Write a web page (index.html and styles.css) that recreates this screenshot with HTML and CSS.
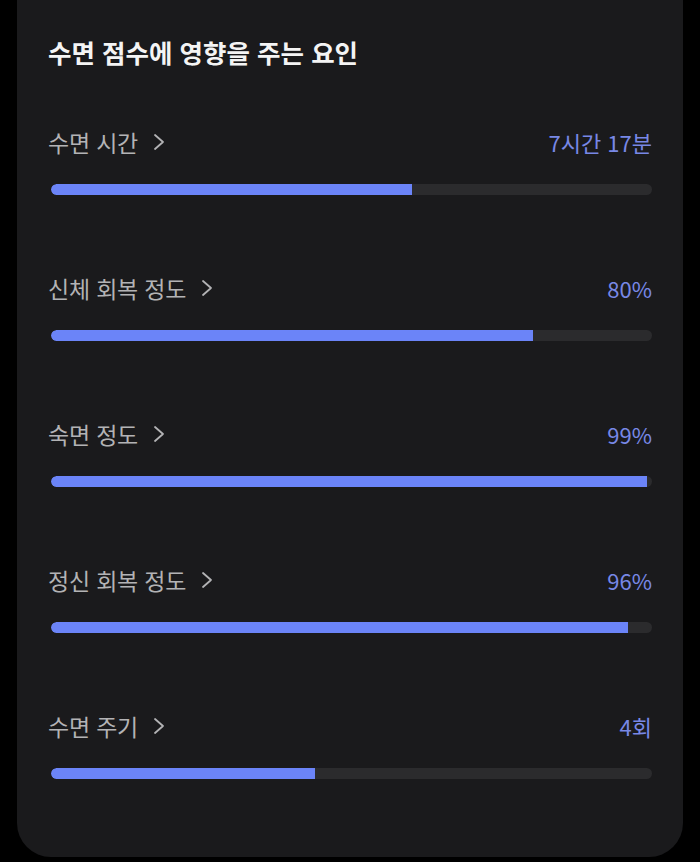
FILE: index.html
```html
<!DOCTYPE html>
<html lang="ko">
<head>
<meta charset="utf-8">
<title>수면 점수에 영향을 주는 요인</title>
<link rel="stylesheet" href="styles.css">
</head>
<body>
<section class="card">
  <h2 class="title">수면 점수에 영향을 주는 요인</h2>
  <ul class="factors">
    <li class="factor">
      <div class="factor-head">
        <span class="label">수면 시간 <svg class="chev" viewBox="0 0 12 18" width="12" height="18"><polyline points="2,2 10,9 2,16"/></svg></span>
        <span class="value">7시간 17분</span>
      </div>
      <div class="track"><div class="fill" style="width:60%"></div></div>
    </li>
    <li class="factor">
      <div class="factor-head">
        <span class="label">신체 회복 정도 <svg class="chev" viewBox="0 0 12 18" width="12" height="18"><polyline points="2,2 10,9 2,16"/></svg></span>
        <span class="value">80%</span>
      </div>
      <div class="track"><div class="fill" style="width:80.2%"></div></div>
    </li>
    <li class="factor">
      <div class="factor-head">
        <span class="label">숙면 정도 <svg class="chev" viewBox="0 0 12 18" width="12" height="18"><polyline points="2,2 10,9 2,16"/></svg></span>
        <span class="value">99%</span>
      </div>
      <div class="track"><div class="fill" style="width:99.2%"></div></div>
    </li>
    <li class="factor">
      <div class="factor-head">
        <span class="label">정신 회복 정도 <svg class="chev" viewBox="0 0 12 18" width="12" height="18"><polyline points="2,2 10,9 2,16"/></svg></span>
        <span class="value">96%</span>
      </div>
      <div class="track"><div class="fill" style="width:96%"></div></div>
    </li>
    <li class="factor">
      <div class="factor-head">
        <span class="label">수면 주기 <svg class="chev" viewBox="0 0 12 18" width="12" height="18"><polyline points="2,2 10,9 2,16"/></svg></span>
        <span class="value">4회</span>
      </div>
      <div class="track"><div class="fill" style="width:44%"></div></div>
    </li>
  </ul>
</section>
</body>
</html>
```
FILE: styles.css
```css
html, body {
  margin: 0;
  padding: 0;
  background: #000;
}
body {
  width: 700px;
  height: 862px;
  overflow: hidden;
  font-family: "Noto Sans CJK KR", "Noto Sans", sans-serif;
}
.card {
  margin: 0 17px;
  background: #1a1a1c;
  border-radius: 0 0 34px 34px;
  padding: 34px 31px 78px 31px;
}
.title {
  margin: 0;
  font-size: 25.5px;
  line-height: 36px;
  font-weight: 700;
  color: #f4f4f4;
}
.factors {
  list-style: none;
  margin: 57px 0 0 0;
  padding: 0;
  display: flex;
  flex-direction: column;
  gap: 78px;
}
.factor-head {
  display: flex;
  justify-content: space-between;
  align-items: center;
  height: 30px;
  margin-bottom: 27px;
}
.label {
  display: flex;
  align-items: center;
  gap: 10px;
  font-size: 23px;
  line-height: 30px;
  color: #b3b3b5;
  letter-spacing: -0.2px;
}
.chev {
  fill: none;
  stroke: #b3b3b5;
  stroke-width: 1.8;
  stroke-linecap: round;
  stroke-linejoin: round;
  margin-left: 5px;
}
.value {
  font-size: 22px;
  line-height: 30px;
  color: #7888e6;
}
.track {
  margin-left: 3px;
  height: 11px;
  background: #2b2b2d;
  border-radius: 6px;
  overflow: hidden;
}
.fill {
  height: 100%;
  background: #6b84f8;
  border-radius: 6px 0 0 6px;
}
```
